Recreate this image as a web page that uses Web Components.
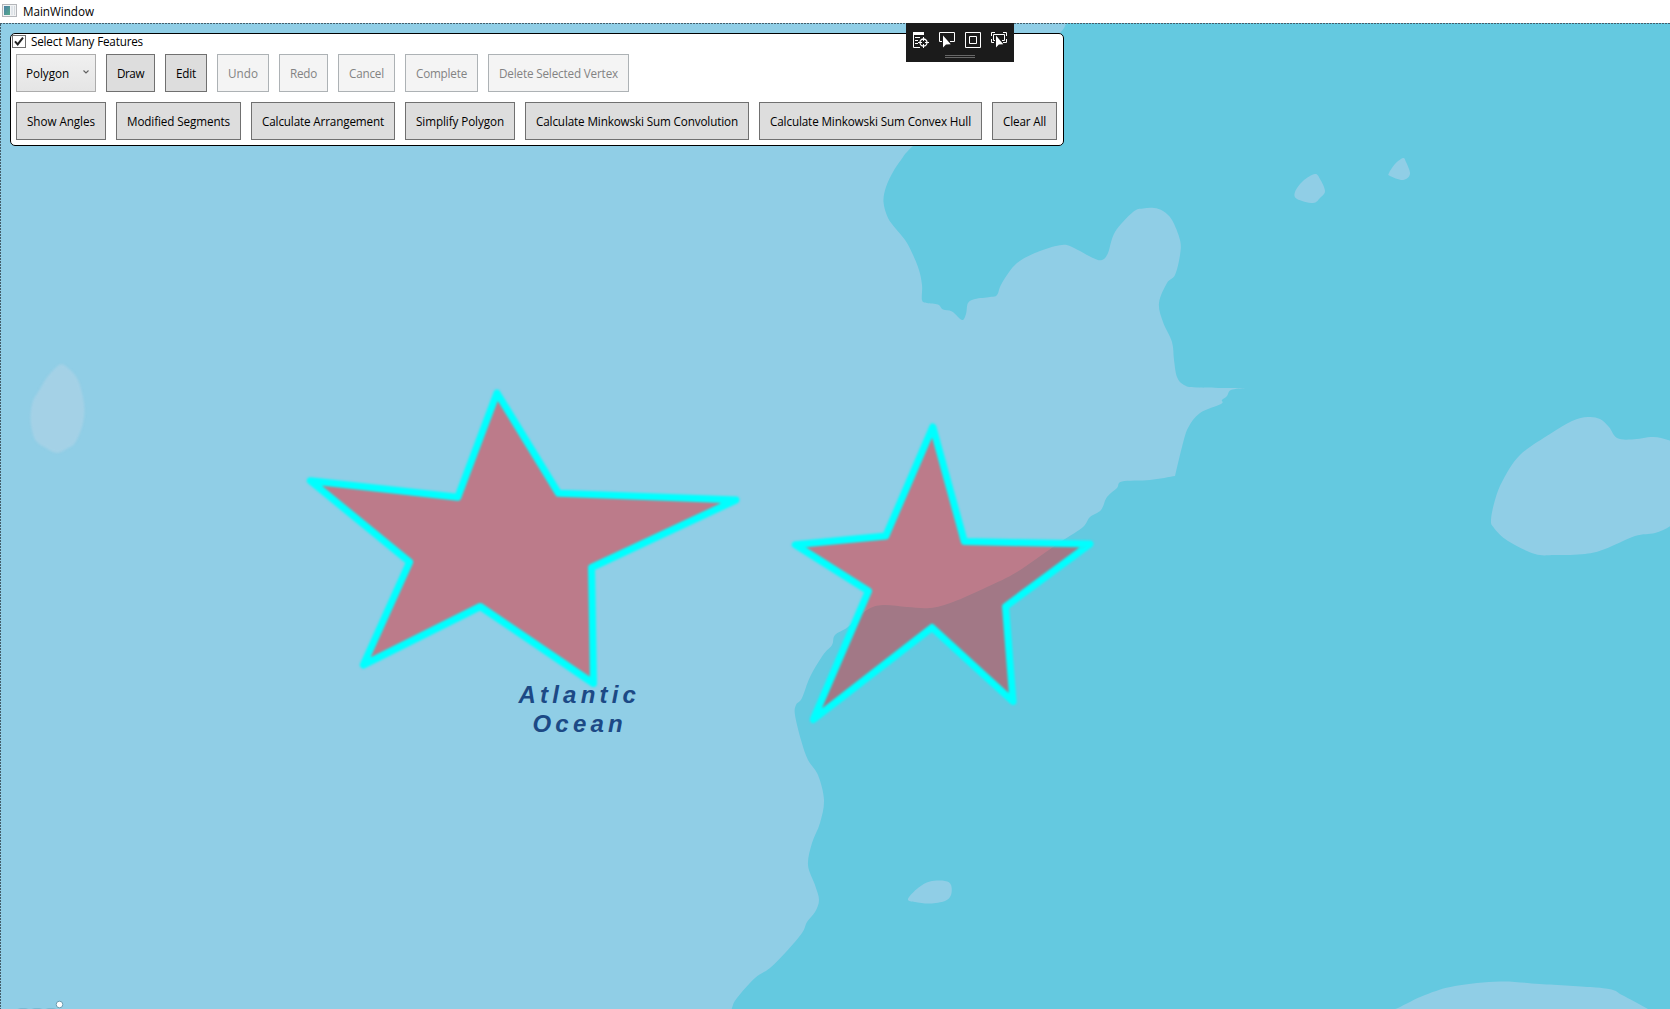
<!DOCTYPE html>
<html lang="en">
<head>
<meta charset="utf-8">
<title>MainWindow</title>
<style>
html,body{margin:0;height:100%;overflow:hidden;background:#fff}
body{font:11.7px/16px "Open Sans","Noto Sans",sans-serif;color:#000}
</style>
</head>
<body>
<app-window>
  <title-bar slot="title"><fit-text width="71">MainWindow</fit-text></title-bar>
  <map-view></map-view>
  <tool-panel slot="overlay">
    <check-box slot="option"><fit-text width="112">Select Many Features</fit-text></check-box>
    <tool-row slot="rows">
      <combo-box><fit-text width="43">Polygon</fit-text></combo-box>
      <tool-button><fit-text width="27">Draw</fit-text></tool-button>
      <tool-button><fit-text width="20">Edit</fit-text></tool-button>
      <tool-button disabled><fit-text width="30">Undo</fit-text></tool-button>
      <tool-button disabled><fit-text width="27">Redo</fit-text></tool-button>
      <tool-button disabled><fit-text width="35">Cancel</fit-text></tool-button>
      <tool-button disabled><fit-text width="51">Complete</fit-text></tool-button>
      <tool-button disabled><fit-text width="119">Delete Selected Vertex</fit-text></tool-button>
    </tool-row>
    <tool-row slot="rows">
      <tool-button><fit-text width="68">Show Angles</fit-text></tool-button>
      <tool-button><fit-text width="103">Modified Segments</fit-text></tool-button>
      <tool-button><fit-text width="122">Calculate Arrangement</fit-text></tool-button>
      <tool-button><fit-text width="88">Simplify Polygon</fit-text></tool-button>
      <tool-button><fit-text width="202">Calculate Minkowski Sum Convolution</fit-text></tool-button>
      <tool-button><fit-text width="201">Calculate Minkowski Sum Convex Hull</fit-text></tool-button>
      <tool-button><fit-text width="43">Clear All</fit-text></tool-button>
    </tool-row>
  </tool-panel>
  <debug-bar slot="overlay"></debug-bar>
</app-window>
<script>
const define = (name, html, ready) => customElements.define(name, class extends HTMLElement {
  connectedCallback() {
    if (this.shadowRoot) return;
    this.attachShadow({mode: 'open'}).innerHTML = html;
    if (ready) ready(this, this.shadowRoot);
  }
});

define('app-window', `<style>
:host{display:flex;flex-direction:column;width:1670px;height:1009px;overflow:hidden}
.client{position:relative;flex:1;min-height:0}
</style><slot name="title"></slot><div class="client"><slot></slot><slot name="overlay"></slot></div>`);

define('title-bar', `<style>
:host{display:flex;align-items:center;gap:6px;box-sizing:border-box;height:23px;padding:0 0 2px 2px;background:#fff}
svg{display:block}
</style><svg width="15" height="13" viewBox="0 0 15 13" shape-rendering="crispEdges">
<defs><linearGradient id="g" x1="0" y1="0" x2="1" y2="1"><stop offset="0" stop-color="#4b7fa6"/><stop offset="1" stop-color="#56ab8a"/></linearGradient></defs>
<rect x=".5" y=".5" width="14" height="12" fill="#f2f3f4" stroke="#b4b6ba"/><rect x="2" y="2" width="6" height="9" fill="url(#g)"/><rect x="9" y="2" width="2" height="9" fill="#e0e5ea"/><rect x="12" y="2" width="1" height="9" fill="#d3d9de"/></svg><slot></slot>`);

/* Spreads its text over a given pixel width by adjusting the tracking. */
define('fit-text', `<style>:host{display:inline-block;white-space:pre;flex:none}span{display:inline-block}</style><span><slot></slot></span>`, (el, root) => {
  const span = root.querySelector('span'), w = +el.getAttribute('width');
  const fit = () => {
    span.style.letterSpacing = '0px';
    const natural = span.getBoundingClientRect().width;
    if (natural) span.style.letterSpacing = (w - natural) / el.textContent.length + 'px';
    el.style.width = w + 'px';
  };
  fit();
  requestAnimationFrame(fit);
});

define('tool-panel', `<style>
:host{position:absolute;left:10px;top:10px;box-sizing:border-box;width:1053.500px;height:113px;border:1px solid #000;border-radius:5px;background:#fff;display:flex;flex-direction:column}
.rows{display:flex;flex-direction:column;gap:10px;padding:5px 5px 0}
</style><slot name="option"></slot><div class="rows"><slot name="rows"></slot></div>`);

define('check-box', `<style>
:host{display:flex;align-items:flex-start;gap:5px;height:15px;padding:0 0 0 1px;line-height:15px}
svg{display:block;margin-top:1px}
</style><svg width="14" height="13" viewBox="0 0 14 13"><rect x=".5" y=".5" width="13" height="12" fill="#fff" stroke="#707070"/><path d="M3 6.3 5.7 9.4 11 2.7" fill="none" stroke="#212121" stroke-width="2"/></svg><slot></slot>`);

define('tool-row', `<style>:host{display:flex;gap:10px;height:38px}</style><slot></slot>`);

define('tool-button', `<style>
:host{display:flex;align-items:center;box-sizing:border-box;height:38px;padding:0 10px 0;border:1px solid #707070;background:#ddd;color:#000}
:host([disabled]){border-color:#adb2b5;background:#f4f4f4;color:#838383}
</style><slot></slot>`);

define('combo-box', `<style>
:host{display:flex;align-items:center;justify-content:space-between;box-sizing:border-box;width:80px;height:38px;padding:0 6px 1px 9px;border:1px solid #acacac;background:linear-gradient(#f0f0f0,#e5e5e5)}
svg{margin-bottom:1px}
</style><slot></slot><svg width="6" height="4" viewBox="0 0 6 4"><path d="M.5.5 3 3 5.5.5" fill="none" stroke="#606060" stroke-width="1.1"/></svg>`);

define('debug-bar', `<style>
:host{position:absolute;left:906px;top:0;width:108px;height:39px;background:#1b1b1b;display:flex;flex-direction:column;align-items:center}
.icons{display:flex;gap:10px;padding-top:9px}svg{display:block}
.grip{width:30px;height:1px;border-top:1px solid #686868;border-bottom:1px solid #686868;margin-top:7px}
</style><div class="icons">
<svg width="16" height="16" viewBox="0 0 16 16" fill="none" stroke="#fff"><path d="M0 0h11v3H0z" fill="#fff" stroke="none"/><path d="M.5 2v13.500H7M2 5.500h5M2 8.500h3M2 11.500h3"/><circle cx="10.500" cy="10.500" r="3.500" stroke-width="1.300"/><path d="M10.500 5v4M10.500 12v4M5 10.500h4M12 10.500h4"/></svg>
<svg width="16" height="16" viewBox="0 0 16 16" fill="none" stroke="#fff"><path d="M3 9.500H.5v-9h15v9H11"/><path d="M4 3.500v12l3-3 4.800-.2z" fill="#fff" stroke="none"/></svg>
<svg width="16" height="16" viewBox="0 0 16 16" fill="none" stroke="#fff"><path d="M.5.5h15v15H.5zM4.500 4.500h7v7h-7z"/></svg>
<svg width="16" height="16" viewBox="0 0 16 16" fill="none" stroke="#fff"><path d="M.5 4V.5H4M12 .5h3.500V4M.5 7v3.500H3M15.500 7v3.500H12M4 8.500H2.500v-6h11v6H11"/><path d="M5 3.500v12l2.800-3 4.500-.2z" fill="#fff" stroke="none"/></svg>
</div><div class="grip"></div>`);

/* Closed Catmull-Rom curve through [x, y] pairs, written as an SVG path. */
const smooth = str => {
  const p = str.trim().split(/\s+/).map(s => s.split(',').map(Number)), n = p.length;
  let d = 'M' + p[0];
  for (let i = 0; i < n; i++) {
    const [a, b, c, e] = [-1, 0, 1, 2].map(k => p[(i + k + n) % n]);
    d += 'C' + [b[0] + (c[0] - a[0]) / 6, b[1] + (c[1] - a[1]) / 6, c[0] - (e[0] - b[0]) / 6, c[1] - (e[1] - b[1]) / 6, c[0], c[1]].map(v => v.toFixed(2)).join(' ');
  }
  return d + 'Z';
};
const deep = smooth(`1700,0 1700,0 1085,0 1067,23 1059,34 1020,70 960,105 913,146 901,160 893,172 886,187 883.500,202 888,218 896,229 907,243 918,267 922,285 922,300 927,303 938,304.500 943,309.500 952,311.500 962,320 966,314 968,303 975,299 990,297 997,295 1002,283 1017,263 1040,251 1062,245 1073,247.500 1093,258 1102,260 1108,253 1115,232 1133,212 1143,208.500 1154,208 1163,211 1172,220 1180,240 1180,255 1175,275 1167,283 1159,303 1163,322 1172,342 1174,360 1177,377 1184,385 1197,387.500 1245,388 1245,388 1231,390 1227,396 1222,400 1221,404 1200,413 1188,428 1182,447 1175,476 1175,476 1150,480 1122,481.500 1117,488 1107,497 1101,510 1090,517 1083,527 1065,539 1053,547 1017,572 987,587 953,602 930,608 907,607 883,605 867,610 848,627 835,635 832,645 823,655 810,677 802,698 796,705 795,715 801,740 808,760 818,775 824,800 820,823 812,843 808,865 815,885 819,900 815,912 807,922 802,933 786,952 770,968 755,978 737,998 732,1008 726,1030 726,1030 1700,1030 1700,1030`);
const shoals = [
  '1315,174 1320,179 1325,191 1320,198 1313,203 1297,199 1295,192 1303,181',
  '1403,158 1406,162 1410,174 1403,180 1390,176 1389,173 1395,164',
  '1680,446 1668,440 1653,437 1632,439.500 1617,438 1609,427 1600,419 1588,417 1572,421 1550,434 1520,455 1503,480 1495,500 1491,520 1494,528 1508,541 1535,554 1555,555 1585,554 1605,549 1635,536 1655,533 1672,525 1690,510 1690,460',
  '908,899 918,888 930,881.500 945,881 951,885 951,895 945,901 930,903.500 915,902',
  '1385,1015 1398,1008 1425,995 1455,986 1500,981.500 1540,984 1596,987.500 1613,990 1622,995 1648,1009 1660,1018 1500,1030'
].map(smooth).join('');
const starA = '497,393 558.500,493.300 736,500 591.500,567.500 593.500,683.500 480.300,606.500 363.300,665 409.700,562 310.300,480.700 457.800,497.300';
const starB = '932.800,427 964.300,541.500 1090,544 1005.500,606.500 1013,701.500 932,627.500 813.300,719.500 868.500,591 795.300,544.700 885.800,536';

define('map-view', `<style>
:host{display:block;height:986px;background:#90cee6}
svg{display:block}
text{font:italic bold 24px "Liberation Sans",Arial,sans-serif;letter-spacing:4.2px;fill:#1c4985}
</style><svg width="1670" height="986" viewBox="0 23 1670 986">
<defs><filter id="soft" x="-5%" y="-5%" width="110%" height="110%" color-interpolation-filters="sRGB"><feGaussianBlur stdDeviation=".8"/></filter></defs>
<path d="${deep}" fill="#64c9e0"/><path d="${shoals}" fill="#90cee6"/>
<path d="${smooth('60,364.500 68,368 77,378 82,393 84.500,410 82,427 75,443 68,448 57,453 46,448 36,441 32,430 30.500,416 33,401 40,389 48,376')}" fill="#a4d1e6" filter="url(#soft)"/>
<g fill="#f00" fill-opacity=".4"><polygon points="${starA}"/><polygon points="${starB}"/></g>
<g filter="url(#soft)" stroke="#0ff" stroke-width="7" stroke-linejoin="round" fill="none"><polygon points="${starA}"/><polygon points="${starB}"/></g>
<text x="518.500" y="703">Atlantic</text><text x="532.500" y="732">Ocean</text>
<g filter="url(#soft)" fill="#5c9db8" opacity=".8"><rect x="19" y="1008.300" width="8" height="2"/><rect x="33" y="1008.300" width="8" height="2"/><rect x="47" y="1008.300" width="8" height="2"/></g>
<circle cx="59.500" cy="1004.500" r="3.300" fill="#fff" stroke="#6c9db2" stroke-width="1"/>
<path d="M0 23.500H1670M.5 24V1009" stroke="#445f6c" stroke-dasharray="2 1" fill="none"/>
</svg>`);
</script>
</body>
</html>
